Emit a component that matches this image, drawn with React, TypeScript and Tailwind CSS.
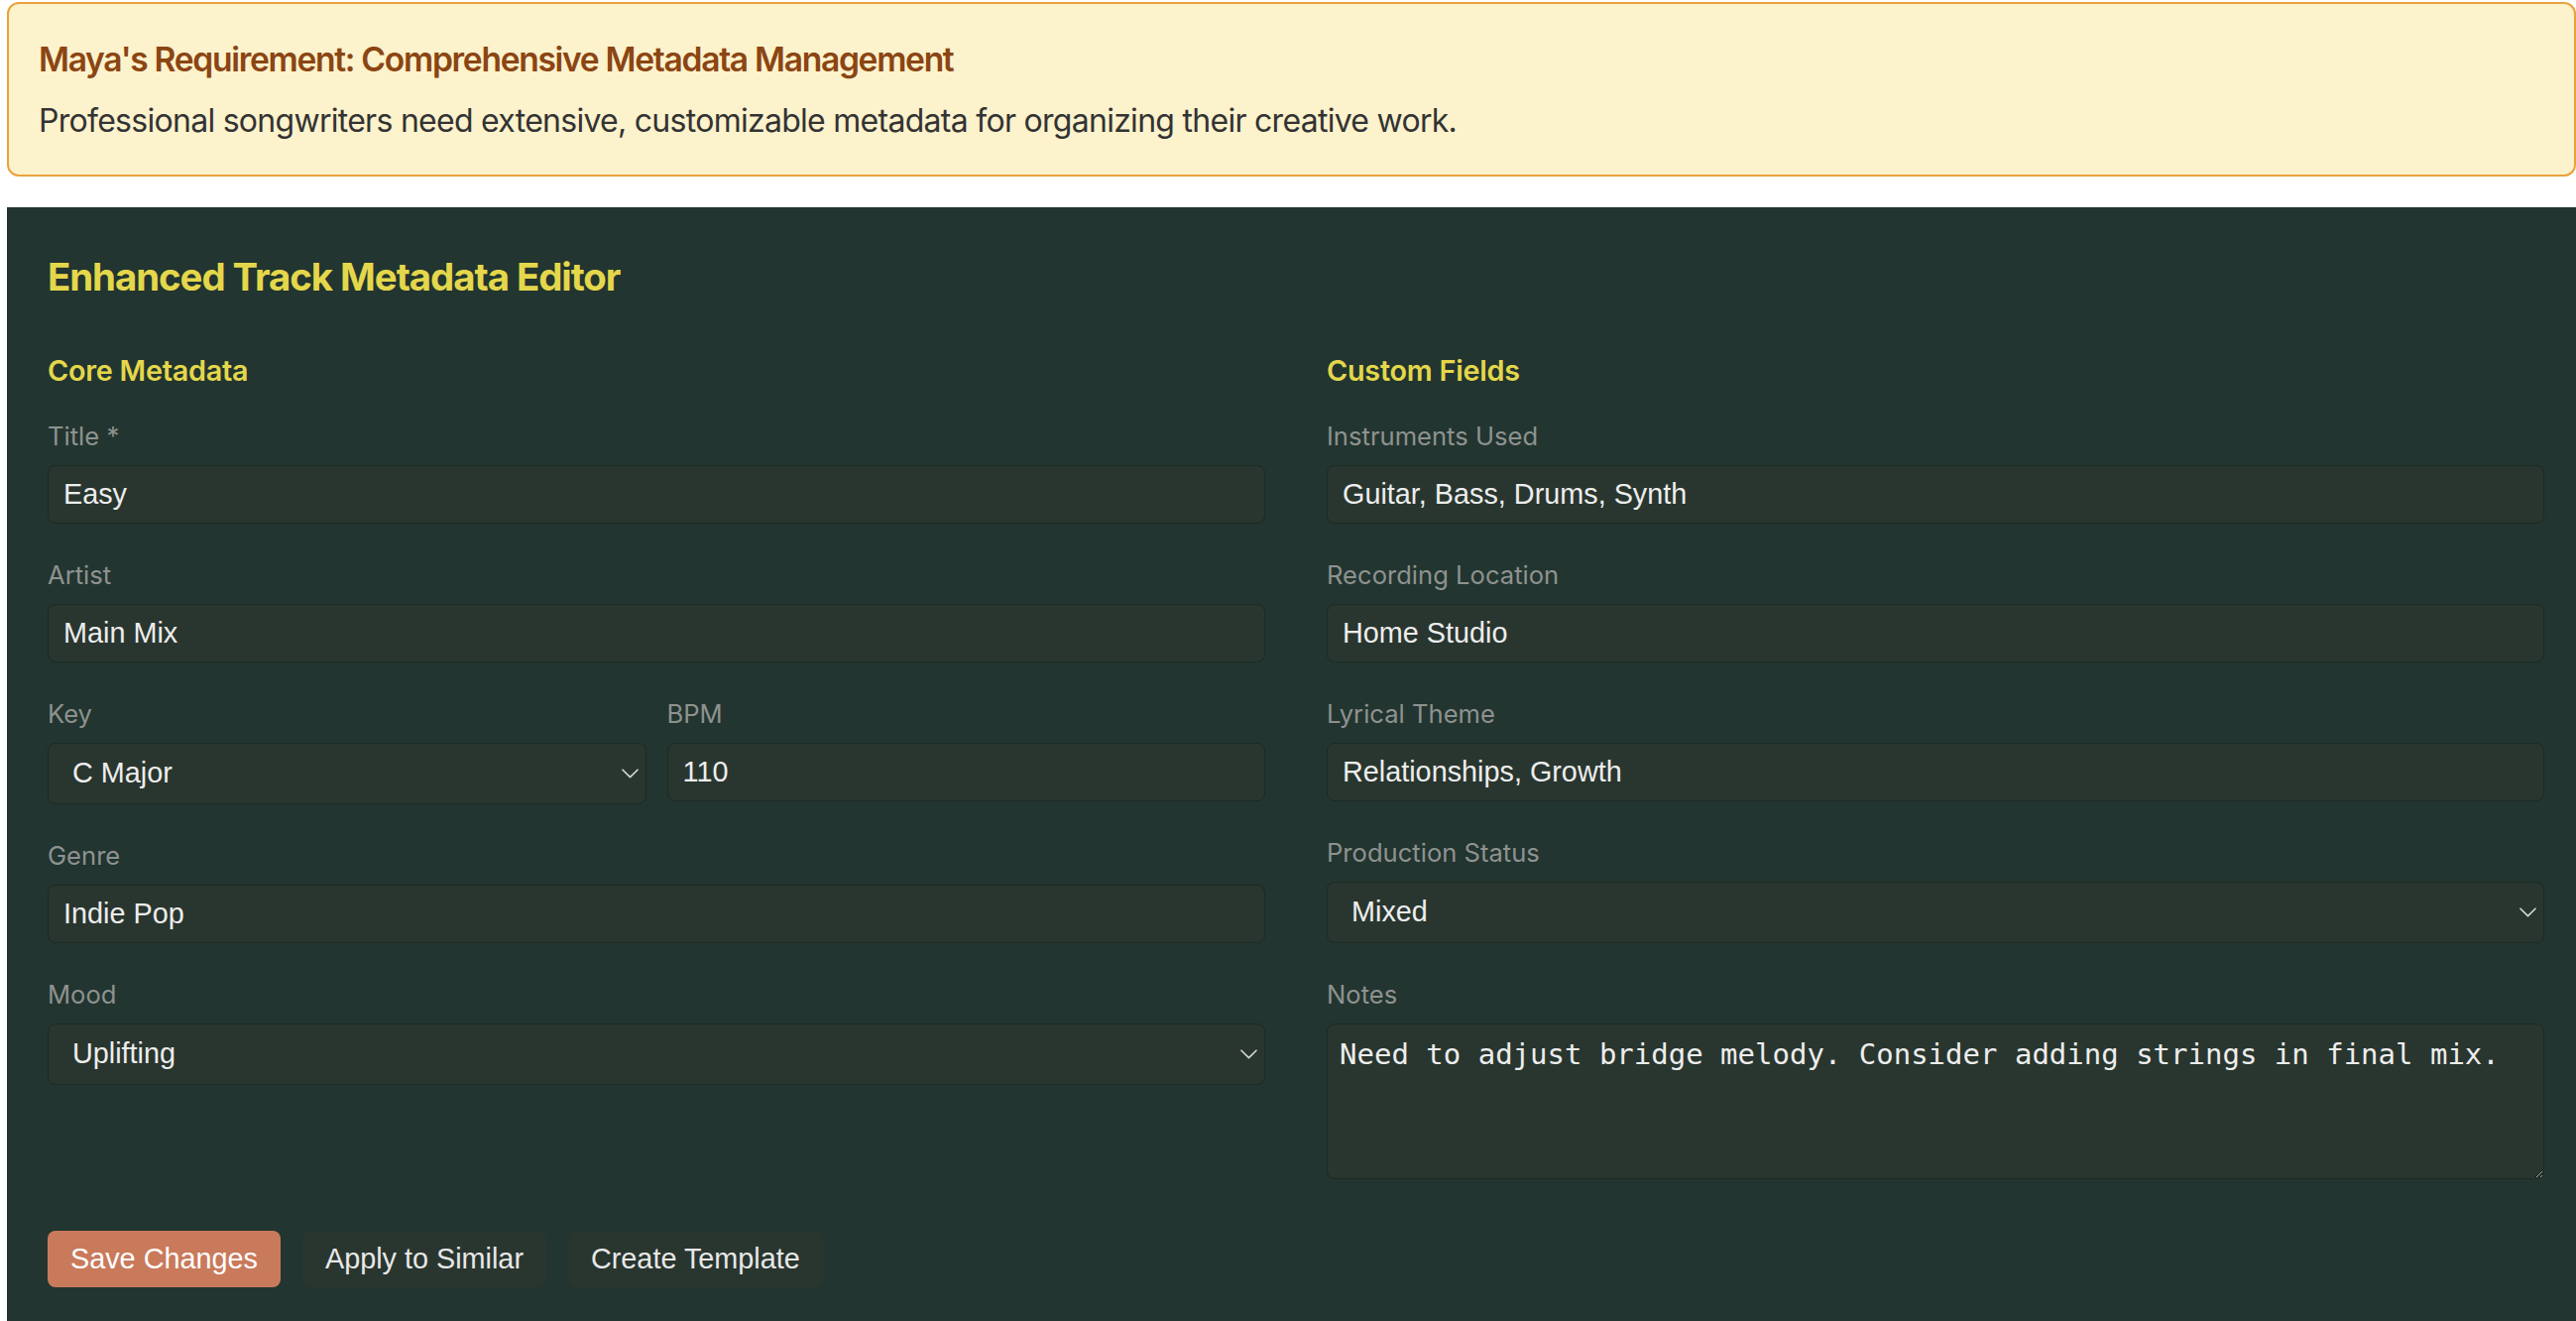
import React from "react";

const sys = { fontFamily: "Inter, 'Noto Sans', sans-serif" };

function Chevron() {
  return (
    <svg
      className="pointer-events-none absolute right-[8px] top-1/2 -translate-y-1/2"
      width="17"
      height="10"
      viewBox="0 0 17 10"
      fill="none"
    >
      <path d="M1 1.2 L8.5 8.6 L16 1.2" stroke="#d6d8d6" strokeWidth="1.6" strokeLinecap="round" strokeLinejoin="round" />
    </svg>
  );
}

function Label({ children }: { children: React.ReactNode }) {
  return (
    <label className="block text-[25.6px] leading-[32px] mb-[13px] text-[#8e928f]" style={sys}>
      {children}
    </label>
  );
}

function TextField({ label, value }: { label: string; value: string }) {
  return (
    <div className="mb-[36px]">
      <Label>{label}</Label>
      <input
        defaultValue={value}
        className="block w-full h-[59px] px-[15px] rounded-[8px] border border-[#1d2a25] bg-[#29362f] text-[#ededed] text-[28.8px] outline-none font-['Liberation_Sans',Arial,sans-serif]"
      />
    </div>
  );
}

function SelectBox({ value, options }: { value: string; options: string[] }) {
  return (
    <div className="relative">
      <select
        defaultValue={value}
        className="block w-full h-[62px] pl-[24px] pr-[40px] rounded-[8px] border border-[#1d2a25] bg-[#29362f] text-[#ededed] text-[28.8px] outline-none appearance-none font-['Liberation_Sans',Arial,sans-serif]"
      >
        {options.map((o) => (
          <option key={o} value={o}>
            {o}
          </option>
        ))}
      </select>
      <Chevron />
    </div>
  );
}

function SelectField({ label, value, options }: { label: string; value: string; options: string[] }) {
  return (
    <div className="mb-[36px]">
      <Label>{label}</Label>
      <SelectBox value={value} options={options} />
    </div>
  );
}

export default function App() {
  return (
    <div className="w-full min-h-screen bg-white pl-[7px] pt-[2px]">
      <div className="rounded-[12px] border-2 border-[#e9a23b] bg-[#fcf2cc] pl-[30px] pt-[36px] pb-[35px]" style={sys}>
        <h3 className="text-[33.6px] leading-[40.7px] font-semibold tracking-[-1.3px] text-[#8b4513]">
          Maya's Requirement: Comprehensive Metadata Management
        </h3>
        <p className="mt-[21px] text-[32px] leading-[39px] tracking-[-0.72px] text-[#333333]">
          Professional songwriters need extensive, customizable metadata for organizing their creative work.
        </p>
      </div>

      <div className="mt-[31px] bg-[#223530] pl-[41px] pr-[32px] pt-[47px] pb-[41px]">
        <h2 className="text-[38.4px] leading-[46px] font-bold tracking-[-1.05px] text-[#e4d74b]" style={sys}>
          Enhanced Track Metadata Editor
        </h2>

        <div className="mt-[54px] grid grid-cols-2 gap-x-[62px]">
          <div>
            <h3 className="text-[28.8px] leading-[35px] font-semibold tracking-[-0.25px] text-[#e4d74b] mb-[33px]" style={sys}>
              Core Metadata
            </h3>
            <TextField label="Title *" value="Easy" />
            <TextField label="Artist" value="Main Mix" />
            <div className="grid grid-cols-2 gap-x-[21px] mb-[36px]">
              <div>
                <Label>Key</Label>
                <SelectBox value="C Major" options={["C Major", "G Major", "D Major", "A Minor", "E Minor"]} />
              </div>
              <div>
                <Label>BPM</Label>
                <input
                  defaultValue="110"
                  className="block w-full h-[59px] px-[15px] rounded-[8px] border border-[#1d2a25] bg-[#29362f] text-[#ededed] text-[28.8px] outline-none font-['Liberation_Sans',Arial,sans-serif]"
                />
              </div>
            </div>
            <TextField label="Genre" value="Indie Pop" />
            <SelectField label="Mood" value="Uplifting" options={["Uplifting", "Melancholic", "Energetic", "Calm"]} />
          </div>

          <div>
            <h3 className="text-[28.8px] leading-[35px] font-semibold tracking-[-0.25px] text-[#e4d74b] mb-[33px]" style={sys}>
              Custom Fields
            </h3>
            <TextField label="Instruments Used" value="Guitar, Bass, Drums, Synth" />
            <TextField label="Recording Location" value="Home Studio" />
            <TextField label="Lyrical Theme" value="Relationships, Growth" />
            <SelectField
              label="Production Status"
              value="Mixed"
              options={["Demo", "Recorded", "Mixed", "Mastered"]}
            />
            <div className="mb-[36px]">
              <Label>Notes</Label>
              <textarea
                defaultValue="Need to adjust bridge melody. Consider adding strings in final mix."
                className="block w-full h-[157px] px-[12px] pt-[9px] pb-[12px] rounded-[8px] border border-[#1d2a25] bg-[#29362f] text-[#ededed] text-[29px] outline-none font-['DejaVu_Sans_Mono',monospace]"
              />
            </div>
          </div>
        </div>

        <div className="mt-[16px] flex gap-[22px] font-['Liberation_Sans',Arial,sans-serif]">
          <button className="h-[57px] px-[23px] rounded-[8px] bg-[#c97a5b] text-white text-[28.8px]">
            Save Changes
          </button>
          <button className="h-[57px] px-[23px] rounded-[8px] bg-[#29362f] text-[#e8e8e8] text-[28.8px]">
            Apply to Similar
          </button>
          <button className="h-[57px] px-[23px] rounded-[8px] bg-[#29362f] text-[#e8e8e8] text-[28.8px]">
            Create Template
          </button>
        </div>
      </div>
    </div>
  );
}
